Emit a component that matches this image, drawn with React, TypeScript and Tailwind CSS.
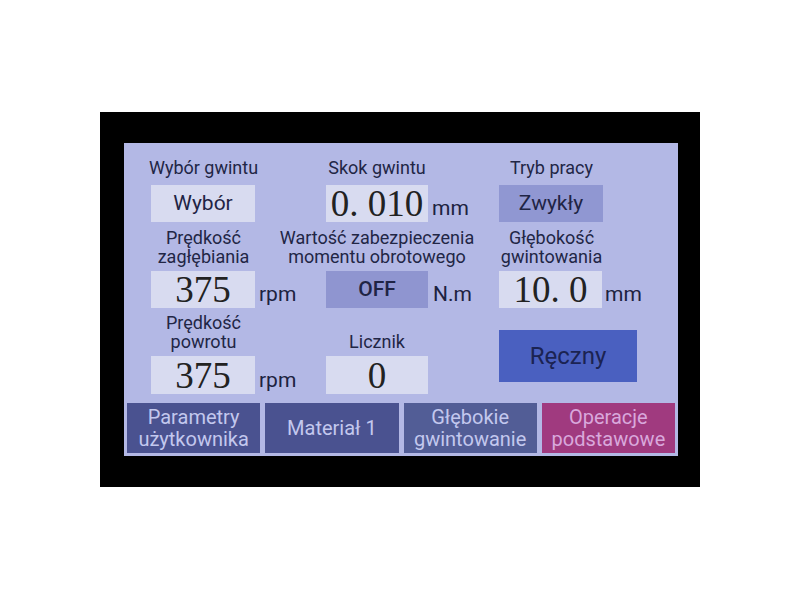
import React from "react";

const font = { fontFamily: "Roboto, 'Noto Sans', sans-serif" };
const serif = { fontFamily: "'Liberation Serif', 'Times New Roman', serif" };

function Label({ lines, pb }: { lines: string[]; pb: string }) {
  return (
    <div className={`flex flex-col justify-end items-center w-[105px] text-[18px] leading-[19px] text-[#222645] ${pb}`}>
      {lines.map((l) => (
        <div key={l} className="whitespace-nowrap">{l}</div>
      ))}
    </div>
  );
}

function NumBox({ value, unit, ml, w = "w-[104px]" }: { value: string; unit?: string; ml?: string; w?: string }) {
  return (
    <div className="flex items-end">
      <div
        className={`${w} h-full bg-[#d8dbf0] flex items-center justify-center text-[37px] leading-none text-[#222]`}
        style={serif}
      >
        <span className="whitespace-pre">{value}</span>
      </div>
      {unit && (
        <span className={`text-[21px] leading-[20px] pb-[4px] text-[#1d2240] ${ml ?? "ml-[4px]"}`}>{unit}</span>
      )}
    </div>
  );
}

function TextBox({ value, dark }: { value: string; dark?: boolean }) {
  return (
    <div className="flex items-end">
      <div
        className={`w-[104px] h-full flex items-center justify-center text-[21px] ${
          dark ? "bg-[#9097d2]" : "bg-[#d8dbf0]"
        } text-[#1f2445]`}
      >
        {value}
      </div>
    </div>
  );
}

export default function App() {
  return (
    <div className="w-[800px] h-[600px] bg-white pt-[112px] pl-[100px]" style={font}>
      <div className="w-[600px] h-[375px] bg-black pt-[31px] pl-[24px]">
        <div className="w-[554px] h-[313px] bg-[#b3b8e5] flex flex-col">
          <div className="grid grid-cols-[175px_173px_1fr] grid-rows-[42px_37px_49px_37px_48px_38px] pl-[27px]">
            <Label lines={["Wybór gwintu"]} pb="pb-[8px]" />
            <div className="w-[102px] flex justify-center">
              <Label lines={["Skok gwintu"]} pb="pb-[8px]" />
            </div>
            <Label lines={["Tryb pracy"]} pb="pb-[8px]" />

            <TextBox value="Wybór" />
            <NumBox value="0. 010" unit="mm" w="w-[102px]" />
            <TextBox value="Zwykły" dark />

            <Label lines={["Prędkość", "zagłębiania"]} pb="pb-[5px]" />
            <div className="w-[102px] flex justify-center">
              <Label lines={["Wartość zabezpieczenia", "momentu obrotowego"]} pb="pb-[5px]" />
            </div>
            <Label lines={["Głębokość", "gwintowania"]} pb="pb-[5px]" />

            <NumBox value="375" unit="rpm" />
            <div className="flex items-end">
              <div className="w-[102px] h-full bg-[#8f95d0] flex items-center justify-center text-[21px] font-medium text-[#1f2445]">
                OFF
              </div>
              <span className="text-[21px] leading-[20px] pb-[4px] text-[#1d2240] ml-[5px]">N.m</span>
            </div>
            <NumBox value="10. 0" unit="mm" ml="ml-[3px]" w="w-[103px]" />

            <Label lines={["Prędkość", "powrotu"]} pb="pb-[5px]" />
            <div className="w-[102px] flex justify-center">
              <Label lines={["Licznik"]} pb="pb-[5px]" />
            </div>
            <div className="row-span-2 pt-[22px]">
              <div className="w-[138px] h-[52px] bg-[#4a60c0] flex items-center justify-center text-[24px] text-[#1b2352]">
                Ręczny
              </div>
            </div>

            <NumBox value="375" unit="rpm" />
            <NumBox value="0" w="w-[102px]" />
          </div>

          <div className="grid grid-cols-4 gap-[5px] px-[3px] mt-[9px] h-[50px]">
            <div className="bg-[#4a5290] text-[#c3c8ee] flex flex-col items-center justify-center text-[20px] leading-[22px]">
              <span>Parametry</span>
              <span>użytkownika</span>
            </div>
            <div className="bg-[#4a5290] text-[#c3c8ee] flex items-center justify-center text-[20px] leading-[22px]">
              Materiał 1
            </div>
            <div className="bg-[#525d96] text-[#c3c8ee] flex flex-col items-center justify-center text-[20px] leading-[22px]">
              <span>Głębokie</span>
              <span>gwintowanie</span>
            </div>
            <div className="bg-[#a03a7f] text-[#d9a8dc] flex flex-col items-center justify-center text-[20px] leading-[22px]">
              <span>Operacje</span>
              <span>podstawowe</span>
            </div>
          </div>
        </div>
      </div>
    </div>
  );
}
